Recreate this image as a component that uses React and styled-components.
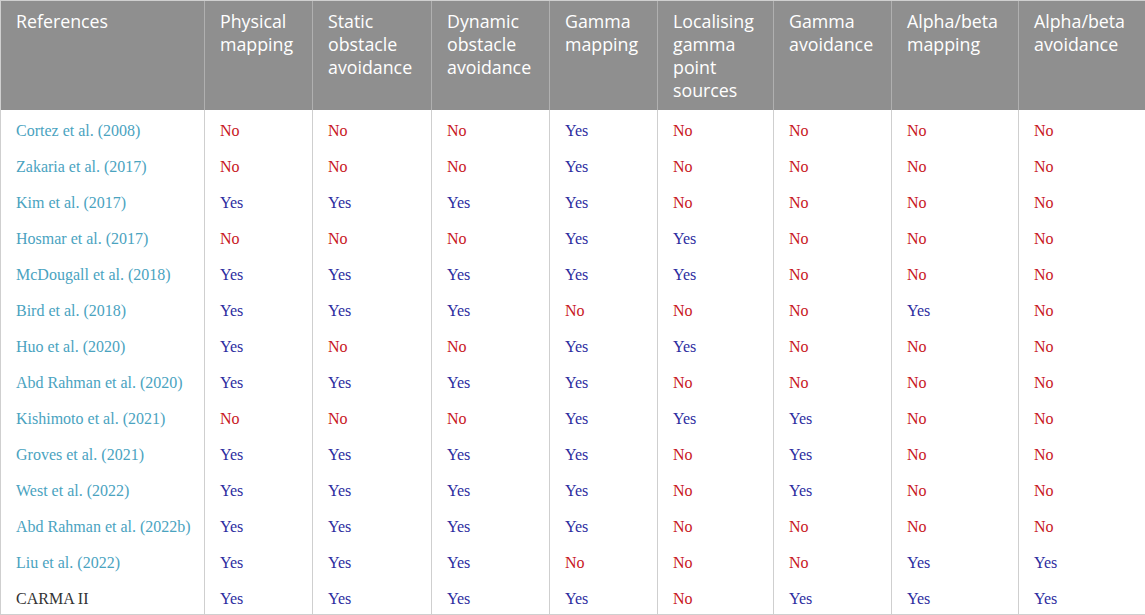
import React from "react";
import styled, { createGlobalStyle } from "styled-components";

const Global = createGlobalStyle`
  html, body { margin: 0; padding: 0; background: #fff; }
`;

const Table = styled.table`
  width: 1145px;
  table-layout: fixed;
  border-collapse: collapse;
  border: 1px solid #cfcfcf;
`;

const HeadCell = styled.th`
  background: #8f8f8f;
  color: #fff;
  font-family: "Open Sans", "Noto Sans", sans-serif;
  font-weight: 400;
  font-size: 17.8px;
  line-height: 23px;
  text-align: left;
  vertical-align: top;
  padding: 9px 8px 8px 15px;
  height: 91px;
  border-left: 1px solid #b0b0b0;
  border-top: 1px solid #cfcfcf;
  &:first-child { border-left: 1px solid #cfcfcf; }
`;

const Cell = styled.td`
  font-family: "Liberation Serif", "Times New Roman", serif;
  font-size: 16px;
  line-height: 18px;
  height: 36px;
  padding: 6px 8px 0 15px;
  box-sizing: border-box;
  vertical-align: middle;
  border-left: 1px solid #cfcfcf;
  color: ${(p) => (p.$v === "Yes" ? "#2d2d9f" : p.$v === "No" ? "#c8161d" : "#333")};
`;

const RefCell = styled(Cell)`
  color: ${(p) => (p.$link ? "#4aa3bf" : "#333")};
`;

const widths = [204, 108, 119, 118, 108, 116, 118, 127, 127];

const headers = [
  "References",
  "Physical mapping",
  "Static obstacle avoidance",
  "Dynamic obstacle avoidance",
  "Gamma mapping",
  "Localising gamma point sources",
  "Gamma avoidance",
  "Alpha/beta mapping",
  "Alpha/beta avoidance",
];

const rows = [
  ["Cortez et al. (2008)", "NNNYNNNN"],
  ["Zakaria et al. (2017)", "NNNYNNNN"],
  ["Kim et al. (2017)", "YYYYNNNN"],
  ["Hosmar et al. (2017)", "NNNYYNNN"],
  ["McDougall et al. (2018)", "YYYYYNNN"],
  ["Bird et al. (2018)", "YYYNNNYN"],
  ["Huo et al. (2020)", "YNNYYNNN"],
  ["Abd Rahman et al. (2020)", "YYYYNNNN"],
  ["Kishimoto et al. (2021)", "NNNYYYNN"],
  ["Groves et al. (2021)", "YYYYNYNN"],
  ["West et al. (2022)", "YYYYNYNN"],
  ["Abd Rahman et al. (2022b)", "YYYYNNNN"],
  ["Liu et al. (2022)", "YYYNNNYY"],
  ["CARMA II", "YYYYNYYY"],
];

export default function App() {
  return (
    <>
      <Global />
      <Table>
        <colgroup>
          {widths.map((w, i) => (
            <col key={i} style={{ width: w }} />
          ))}
        </colgroup>
        <thead>
          <tr>
            {headers.map((h) => (
              <HeadCell key={h}>{h}</HeadCell>
            ))}
          </tr>
        </thead>
        <tbody>
          {rows.map(([name, vals]) => (
            <tr key={name}>
              <RefCell $link={name !== "CARMA II"}>{name}</RefCell>
              {vals.split("").map((c, i) => {
                const v = c === "Y" ? "Yes" : "No";
                return (
                  <Cell key={i} $v={v}>
                    {v}
                  </Cell>
                );
              })}
            </tr>
          ))}
        </tbody>
      </Table>
    </>
  );
}
